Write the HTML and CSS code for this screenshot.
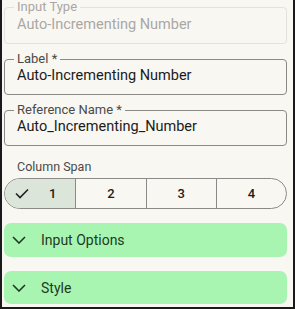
FILE: index.html
```html
<!DOCTYPE html>
<html lang="en">
<head>
    <meta charset="UTF-8">
    <title>Field settings</title>
    <link rel="stylesheet" href="styles.css">
</head>
<body>
    <div class="panel">
        <div class="field disabled">
            <span class="label">Input Type</span>
            <div class="value">Auto-Incrementing Number</div>
        </div>
        <div class="field">
            <span class="label">Label *</span>
            <div class="value">Auto-Incrementing Number</div>
        </div>
        <div class="field">
            <span class="label">Reference Name *</span>
            <div class="value">Auto_Incrementing_Number</div>
        </div>

        <div class="span-title">Column Span</div>
        <div class="segments">
            <div class="seg active">
                <svg class="check" width="14" height="11" viewBox="0 0 14 11"><path d="M1 5.5l4 4 8-8" fill="none" stroke="#222" stroke-width="1.6"/></svg>
                <span>1</span>
            </div>
            <div class="seg"><span>2</span></div>
            <div class="seg"><span>3</span></div>
            <div class="seg"><span>4</span></div>
        </div>

        <div class="acc">
            <svg class="chev" width="14" height="8" viewBox="0 0 14 8"><path d="M1 1l6 6 6-6" fill="none" stroke="#1f3a22" stroke-width="1.6"/></svg>
            <span>Input Options</span>
        </div>
        <div class="acc">
            <svg class="chev" width="14" height="8" viewBox="0 0 14 8"><path d="M1 1l6 6 6-6" fill="none" stroke="#1f3a22" stroke-width="1.6"/></svg>
            <span>Style</span>
        </div>
    </div>
</body>
</html>
```
FILE: styles.css
```css
*{
    margin:0;
    padding:0;
    box-sizing:border-box;
}
body{
    background:#f9f7f2;
    font-family:Roboto, "Noto Sans", sans-serif;
}
.panel{
    width:295px;
    height:309px;
    border:2px solid #1a1a1a;
    border-top:none;
    padding:0 6px 0 2px;
    background:#f9f7f2;
    overflow:hidden;
}
.field{
    position:relative;
    height:36px;
    margin-top:15px;
    border:1px solid #8b8a86;
    border-radius:4px;
    padding:6px 12px 0;
}
.field:first-child{
    height:37px;
    margin-top:7px;
}
.field .label{
    position:absolute;
    top:-8px;
    left:9px;
    padding:0 3px;
    font-size:13px;
    line-height:14px;
    color:#4a4a48;
    background:#f9f7f2;
}
.field .value{
    font-size:14.5px;
    line-height:20px;
    color:#1b1b1b;
}
.field.disabled{
    border-color:#e4e1da;
    padding-top:7px;
}
.field.disabled .label,
.field.disabled .value{
    color:#a9a8a4;
}
.span-title{
    font-size:12.5px;
    line-height:16px;
    color:#4a4a48;
    padding:13px 0 0 13px;
}
.segments{
    display:grid;
    grid-template-columns:repeat(4, 1fr);
    margin-top:3px;
    height:31px;
    border:1px solid #8b8a86;
    border-radius:16px;
    overflow:hidden;
}
.seg{
    display:flex;
    align-items:center;
    justify-content:center;
    font-size:13px;
    font-weight:500;
    color:#1b1b1b;
    border-left:1px solid #8b8a86;
}
.seg:first-child{
    border-left:none;
}
.seg.active{
    background:#dce5d9;
    justify-content:flex-start;
    padding-left:10px;
    gap:20px;
}
.acc{
    display:flex;
    align-items:center;
    height:34px;
    margin-top:14px;
    background:#a8f5b2;
    border-radius:7px;
    padding-left:8px;
    gap:15px;
    font-size:14px;
    color:#1f3a22;
}
.acc + .acc{
    height:33px;
}
```
